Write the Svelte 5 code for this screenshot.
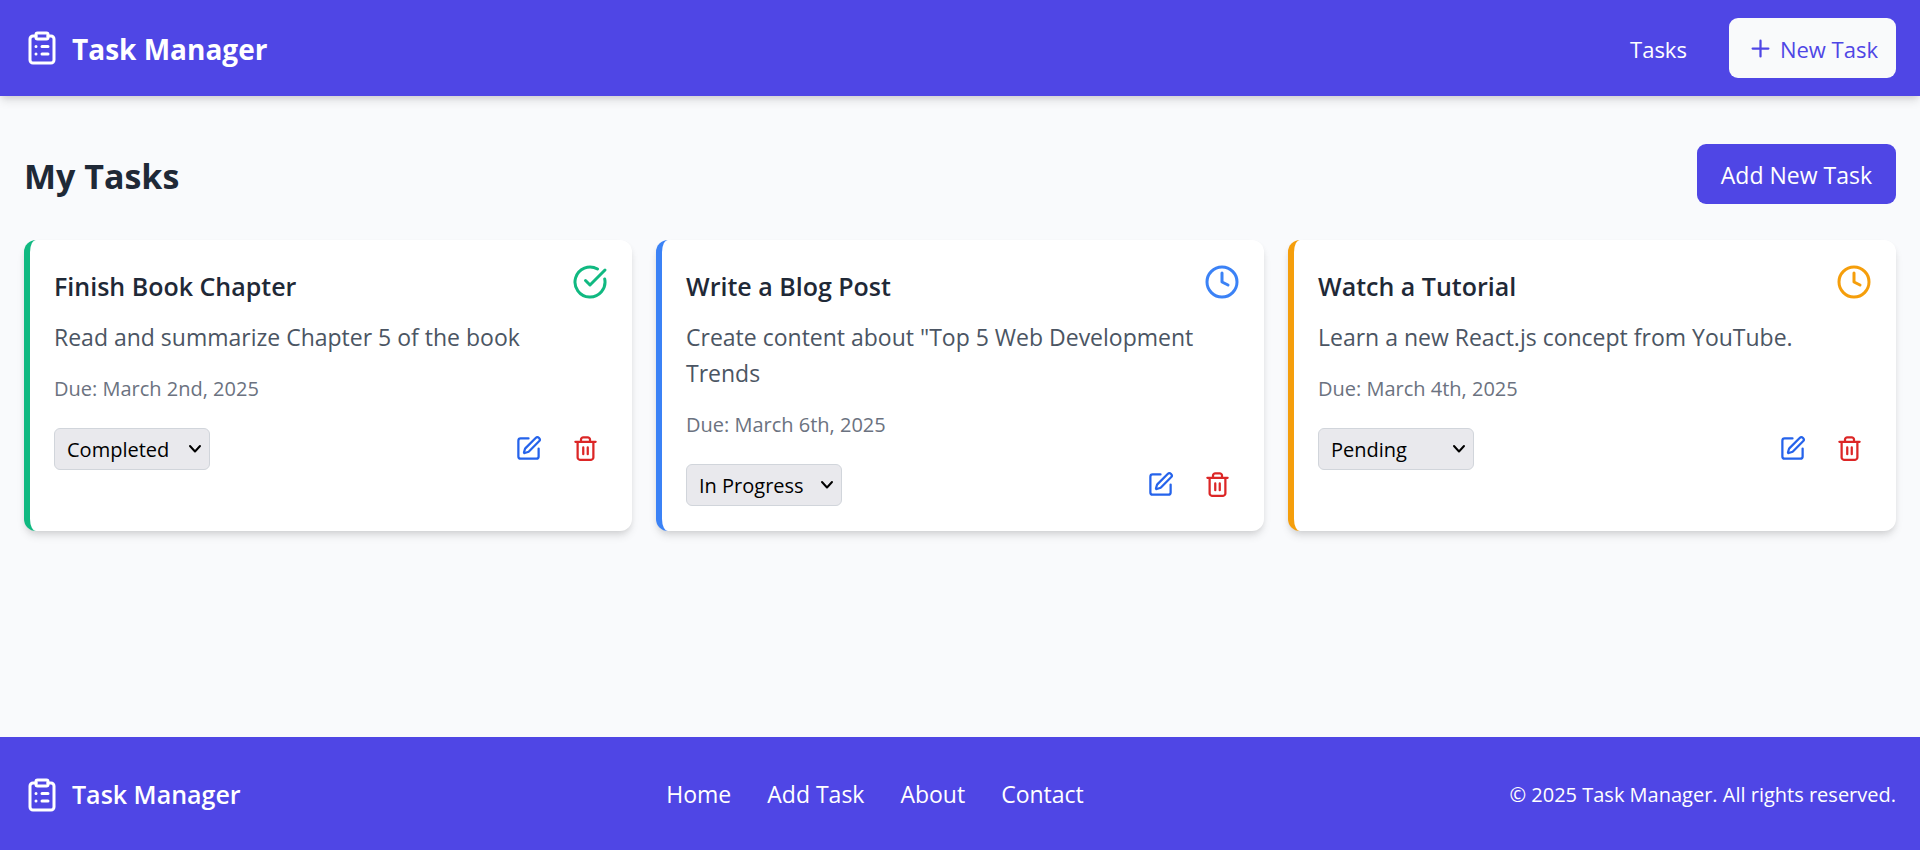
<script>
  let tasks = $state([
    { id: 1, title: 'Finish Book Chapter', text: 'Read and summarize Chapter 5 of the book', due: 'March 2nd, 2025', status: 'Completed' },
    { id: 2, title: 'Write a Blog Post', text: 'Create content about "Top 5 Web Development Trends', due: 'March 6th, 2025', status: 'In Progress' },
    { id: 3, title: 'Watch a Tutorial', text: 'Learn a new React.js concept from YouTube.', due: 'March 4th, 2025', status: 'Pending' }
  ]);
  const statuses = ['Pending', 'In Progress', 'Completed'];
  const links = ['Home', 'Add Task', 'About', 'Contact'];
  const tone = { Completed: 'done', 'In Progress': 'progress', Pending: 'pending' };
</script>

{#snippet clipboard()}
  <svg class="icon large" viewBox="0 0 24 24" aria-hidden="true">
    <rect x="8" y="2" width="8" height="4" rx="1" />
    <path d="M16 4h2a2 2 0 0 1 2 2v14a2 2 0 0 1-2 2H6a2 2 0 0 1-2-2V6a2 2 0 0 1 2-2h2" />
    <path d="M12 11h4M12 16h4M8 11h.01M8 16h.01" />
  </svg>
{/snippet}

<div class="page">
  <header>
    <a class="brand top" href="#home">{@render clipboard()}<span>Task Manager</span></a>
    <nav>
      <a href="#tasks"><span>Tasks</span></a>
      <a class="button light" href="#new">
        <svg class="icon" viewBox="0 0 24 24" aria-hidden="true"><path d="M5 12h14M12 5v14" /></svg>
        <span>New Task</span>
      </a>
    </nav>
  </header>

  <main>
    <div class="heading">
      <h1>My Tasks</h1>
      <button class="button solid">Add New Task</button>
    </div>
    <div class="grid">
      {#each tasks as task (task.id)}
        <article class={tone[task.status]}>
          <div class="title">
            <h2>{task.title}</h2>
            <svg class="icon large" viewBox="0 0 24 24" aria-hidden="true">
              {#if task.status === 'Completed'}
                <path d="M21.801 10A10 10 0 1 1 17 3.335" /><path d="m9 11 3 3L22 4" />
              {:else}
                <circle cx="12" cy="12" r="10" /><path d="M12 6v6l4 2" />
              {/if}
            </svg>
          </div>
          <p class="text">{task.text}</p>
          <p class="due">Due: {task.due}</p>
          <div class="actions">
            <select aria-label="Status of {task.title}" bind:value={task.status}>
              {#each statuses as status}<option value={status}>{status}</option>{/each}
            </select>
            <div class="tools">
              <button class="edit" aria-label="Edit {task.title}">
                <svg class="icon" viewBox="0 0 24 24" aria-hidden="true">
                  <path d="M12 3H5a2 2 0 0 0-2 2v14a2 2 0 0 0 2 2h14a2 2 0 0 0 2-2v-7" />
                  <path d="M18.375 2.625a1 1 0 0 1 3 3l-9.013 9.014a2 2 0 0 1-.853.505l-2.873.84a.5.5 0 0 1-.62-.62l.84-2.873a2 2 0 0 1 .506-.852z" />
                </svg>
              </button>
              <button class="delete" aria-label="Delete {task.title}">
                <svg class="icon" viewBox="0 0 24 24" aria-hidden="true">
                  <path d="M3 6h18M19 6v14c0 1-1 2-2 2H7c-1 0-2-1-2-2V6M8 6V4c0-1 1-2 2-2h4c1 0 2 1 2 2v2M10 11v6M14 11v6" />
                </svg>
              </button>
            </div>
          </div>
        </article>
      {/each}
    </div>
  </main>

  <footer>
    <a class="brand" href="#home">{@render clipboard()}<span>Task Manager</span></a>
    <nav>
      {#each links as link}<a href="#{link}">{link}</a>{/each}
    </nav>
    <p class="copyright">© 2025 Task Manager. All rights reserved.</p>
  </footer>
</div>

<style>
  :global(body) { background: #f9fafb; }
  * { box-sizing: border-box; }
  h1, h2, p { margin: 0; }
  .page {
    display: flex;
    flex-direction: column;
    min-height: 100vh;
    background: #f9fafc;
    color: #1f2937;
    font: 23px/36px "Segoe UI", "Open Sans", "Noto Sans", sans-serif;
  }
  a { color: inherit; text-decoration: none; }
  button, select { font: inherit; cursor: pointer; }
  .icon {
    display: block;
    flex: none;
    width: 27px;
    height: 27px;
    fill: none;
    stroke: currentColor;
    stroke-width: 2;
    stroke-linecap: round;
    stroke-linejoin: round;
  }
  .icon.large { width: 36px; height: 36px; }
  header {
    display: flex;
    align-items: center;
    justify-content: space-between;
    padding: 18px 24px;
    background: #4f46e5;
    color: #fff;
    box-shadow: 0 6px 9px -1px rgb(0 0 0 / 0.1), 0 3px 6px -2px rgb(0 0 0 / 0.1);
  }
  header span { display: block; padding-top: 2px; line-height: 34px; }
  .brand {
    display: flex;
    align-items: center;
    gap: 12px;
    font-size: 25px;
    font-weight: 600;
  }
  .brand.top { font-size: 28px; font-weight: 700; }
  nav { display: flex; align-items: center; }
  header nav { gap: 42px; font-size: 22px; }
  footer nav { gap: 36px; }
  .button {
    display: flex;
    align-items: center;
    border: 0;
    border-radius: 9px;
    padding: 12px 18px;
  }
  .light { gap: 6px; background: #f9fafb; color: #4f46e5; }
  .solid { padding: 13px 24px 11px; background: #4f46e5; color: #fff; }
  main { flex: 1; padding: 48px 24px; }
  .heading {
    display: flex;
    align-items: center;
    justify-content: space-between;
    margin-bottom: 36px;
  }
  h1 { padding-top: 3px; font-size: 34px; line-height: 48px; font-weight: 700; }
  .grid {
    display: grid;
    grid-template-columns: repeat(3, minmax(0, 1fr));
    gap: 24px;
  }
  article {
    padding: 24px;
    border-left: 6px solid currentColor;
    border-radius: 12px;
    background: #fff;
    box-shadow: 0 6px 9px -1px rgb(0 0 0 / 0.1), 0 3px 6px -2px rgb(0 0 0 / 0.1);
  }
  .done { color: #10b981; }
  .progress { color: #3b82f6; }
  .pending { color: #f59e0b; }
  .title { display: flex; align-items: flex-start; justify-content: space-between; }
  h2 { font-size: 25px; line-height: 44px; font-weight: 600; color: #1f2937; }
  .text { margin-top: 11px; color: #4b5563; }
  .due { margin-top: 18px; font-size: 20px; line-height: 32px; color: #6b7280; }
  .actions {
    display: flex;
    align-items: center;
    justify-content: space-between;
    margin-top: 21px;
  }
  select {
    appearance: none;
    width: 156px;
    height: 42px;
    padding: 2px 30px 0 12px;
    border: 1px solid #d1d5db;
    border-radius: 6px;
    background: #e9e9ed url("data:image/svg+xml,%3Csvg xmlns='http://www.w3.org/2000/svg' width='14' height='10' fill='none' stroke='black' stroke-width='2' stroke-linecap='round' stroke-linejoin='round'%3E%3Cpath d='M2 2l5 5.500 5-5.500'/%3E%3C/svg%3E") no-repeat right 7px center;
    color: #000;
    font-size: 20px;
  }
  .tools { display: flex; gap: 12px; }
  .tools button { padding: 9px; border: 0; background: none; }
  .edit { color: #2563eb; }
  .delete { color: #dc2626; }
  footer {
    display: flex;
    align-items: center;
    justify-content: space-between;
    padding: 36px 24px 34px;
    background: #4f46e5;
    color: #fff;
    line-height: 43px;
  }
  .copyright { font-size: 20px; }
  @media (max-width: 1100px) {
    .grid { grid-template-columns: 1fr; }
    footer { flex-direction: column; gap: 12px; }
  }
</style>
